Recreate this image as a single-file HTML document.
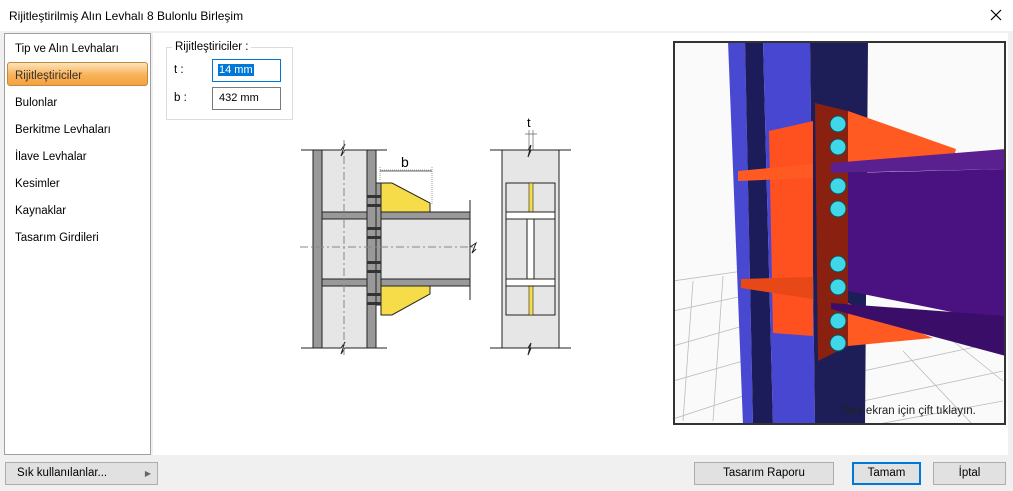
<!DOCTYPE html>
<html><head><meta charset="utf-8"><style>
*{margin:0;padding:0;box-sizing:border-box}
body{width:1013px;height:491px;background:#f0f0f0;font-family:"Liberation Sans",sans-serif;font-size:12px;color:#000;position:relative;overflow:hidden}
.abs{position:absolute}
.title{left:0;top:0;width:1013px;height:31px;background:#fff;font-size:12px}
.title span{position:absolute;left:9px;top:9px}
.list{left:4px;top:33px;width:147px;height:422px;background:#fff;border:1px solid #a0a0a0}
.item{position:absolute;left:10px;font-size:11.5px}
.sel{position:absolute;left:2px;top:28px;width:141px;height:24px;border:1px solid #c08a40;border-radius:3px;background:linear-gradient(#fde3b8,#f8b25a 55%,#f6a23c);}
.main{left:153px;top:33px;width:855px;height:422px;background:#fff}
.grp{left:166px;top:47px;width:127px;height:73px;border:1px solid #dcdcdc}
.btn{position:absolute;height:23px;border:1px solid #adadad;background:#e1e1e1;font-size:11.5px;text-align:center;line-height:21px}
input{}
</style></head><body>
<div class="abs title"><span>Rijitleştirilmiş Alın Levhalı 8 Bulonlu Birleşim</span>
<svg class="abs" style="left:990px;top:9px" width="12" height="12"><path d="M1 1L11 11M11 1L1 11" stroke="#000" stroke-width="1.2"/></svg></div>
<div class="abs list">
<div class="sel"></div>
<div class="item" style="top:9px">Tip ve Alın Levhaları</div>
<div class="item" style="top:36px;color:#333">Rijitleştiriciler</div>
<div class="item" style="top:63px">Bulonlar</div>
<div class="item" style="top:90px">Berkitme Levhaları</div>
<div class="item" style="top:117px">İlave Levhalar</div>
<div class="item" style="top:144px">Kesimler</div>
<div class="item" style="top:171px">Kaynaklar</div>
<div class="item" style="top:198px">Tasarım Girdileri</div>
</div>
<div class="abs main"></div>
<div class="abs grp"></div>
<div class="abs" style="left:172px;top:41px;background:#fff;padding:0 3px;font-size:11.5px">Rijitleştiriciler :</div>
<div class="abs" style="left:174px;top:64px;font-size:11.5px">t :</div>
<div class="abs" style="left:174px;top:92px;font-size:11.5px">b :</div>
<div class="abs" style="left:212px;top:59px;width:69px;height:23px;border:1px solid #0078d7;background:#fff"><span style="position:absolute;left:5px;top:4px;background:#0078d7;color:#fff;font-size:11px;padding:0 1px">14 mm</span></div>
<div class="abs" style="left:212px;top:87px;width:69px;height:23px;border:1px solid #7a7a7a;background:#fff"><span style="position:absolute;left:6px;top:4px;font-size:11px">432 mm</span></div>

<svg class="abs" style="left:0;top:0" width="1013" height="491">
<!-- left drawing -->
<rect x="322" y="150" width="45" height="198" fill="#e6e6e6"/>
<rect x="376" y="219" width="94" height="60" fill="#e6e6e6"/>
<rect x="313" y="150" width="9" height="198" fill="#999" stroke="#222"/>
<rect x="367" y="150" width="9" height="198" fill="#999" stroke="#222"/>
<rect x="322" y="212" width="45" height="7" fill="#999" stroke="#222"/>
<rect x="322" y="279" width="45" height="7" fill="#999" stroke="#222"/>
<rect x="376" y="212" width="94" height="7" fill="#999" stroke="#222"/>
<rect x="376" y="279" width="94" height="7" fill="#999" stroke="#222"/>
<rect x="376" y="183" width="5" height="122" fill="#999" stroke="#222"/>
<path d="M381 183L392 183L430 203L430 212L381 212Z" fill="#f7dc4a" stroke="#222"/>
<path d="M381 286L430 286L430 294L392 315L381 315Z" fill="#f7dc4a" stroke="#222"/>
<g fill="#333"><rect x="367" y="195" width="14" height="3"/><rect x="367" y="204" width="14" height="3"/><rect x="367" y="227" width="14" height="3"/><rect x="367" y="236" width="14" height="3"/><rect x="367" y="261" width="14" height="3"/><rect x="367" y="270" width="14" height="3"/><rect x="367" y="293" width="14" height="3"/><rect x="367" y="302" width="14" height="3"/></g>
<path d="M301 150H341l4-6-4 12 4-6H387M301 348H341l4-6-4 12 4-6H387" stroke="#222" fill="none"/>
<path d="M470 200V300M470 247l6 -4-4 10 4-4" stroke="#222" fill="none"/>
<path d="M300 247H475M344 140V355" stroke="#888" stroke-dasharray="8 3 2 3" fill="none"/>
<path d="M380 170H432M380 167V180M432 167V205" stroke="#888" stroke-width="0.8" stroke-dasharray="1 1" fill="none"/>
<path d="M380 171H432" stroke="#666"/>
<text x="401" y="167" font-size="14" font-family="Liberation Sans">b</text>
<!-- right drawing -->
<rect x="502" y="150" width="57" height="198" fill="#e6e6e6" stroke="#222"/>
<rect x="506" y="183" width="49" height="132" fill="#e6e6e6" stroke="#222"/>
<rect x="529" y="183" width="4" height="132" fill="#f7dc4a" stroke="#222" stroke-width="0.6"/>
<path d="M506 212H555V219H506ZM506 279H555V286H506ZM527 219H534V279H527Z" fill="#fff" stroke="#222"/>
<path d="M490 150H528l3-5-3 12 3-7H571M490 348H528l3-5-3 12 3-7H571" stroke="#222" fill="none"/>
<text x="527" y="127" font-size="13" font-family="Liberation Sans">t</text>
<path d="M525 134H537M529 130V150M533 130V150" stroke="#666" stroke-width="0.7" fill="none"/>
</svg>

<!-- 3D image -->
<div class="abs" style="left:673px;top:41px;width:333px;height:384px;border:2px solid #333;background:#fafafa;overflow:hidden">
<svg width="331" height="382" viewBox="2 2 331 382" style="position:absolute;left:0;top:0">
<g stroke="#bbb" stroke-width="0.8" fill="none">
<path d="M0 240L70 230M0 270L70 255M0 305L70 285M0 340L70 320M0 378L70 355M20 240L10 380M50 235L40 380"/>
<path d="M190 330L330 300M190 360L330 330M200 384L330 360M230 310L300 384M280 300L330 340"/>
</g>
<path d="M55 0H72L80 384H70Z" fill="#4848d0"/>
<path d="M72 0H90L100 384H80Z" fill="#1c1c5a"/>
<path d="M90 0H137L142 384H100Z" fill="#4747d2"/>
<path d="M137 0H195L192 384H142Z" fill="#1d1d58"/>
<path d="M96 90L140 80V295L100 292Z" fill="#ff5020"/>
<path d="M65 130L140 123V137L65 140Z" fill="#ff5a22"/>
<path d="M68 238L140 236V258L68 247Z" fill="#e84818"/>
<path d="M175 70L283 108L280 120L175 125Z" fill="#ff5a22"/>
<path d="M175 262L260 297L175 305Z" fill="#ff5a22"/>
<path d="M142 62L175 70V305L145 320Z" fill="#8a2010"/>
<path d="M158 122L333 108V128L158 132Z" fill="#5a2090"/>
<path d="M175 132L333 128V282L175 250Z" fill="#4a1280"/>
<path d="M158 262L333 275V315L158 268Z" fill="#3a0e68"/>
<g fill="#40d8e8" stroke="#14505a" stroke-width="1">
<circle cx="165" cy="83" r="8"/><circle cx="165" cy="106" r="8"/><circle cx="165" cy="145" r="8"/><circle cx="165" cy="168" r="8"/>
<circle cx="165" cy="223" r="8"/><circle cx="165" cy="246" r="8"/><circle cx="165" cy="280" r="8"/><circle cx="165" cy="302" r="8"/></g>
<text x="168" y="373" font-size="11.5" fill="#222" font-family="Liberation Sans">Tam ekran için çift tıklayın.</text>
</svg></div>

<div class="btn" style="left:5px;top:462px;width:153px;text-align:left;padding-left:11px">Sık kullanılanlar...<span style="position:absolute;right:6px;top:0;font-size:8px;color:#666">▶</span></div>
<div class="btn" style="left:694px;top:462px;width:140px">Tasarım Raporu</div>
<div class="btn" style="left:852px;top:462px;width:69px;border:2px solid #0078d7;line-height:19px">Tamam</div>
<div class="btn" style="left:933px;top:462px;width:73px">İptal</div>
</body></html>
